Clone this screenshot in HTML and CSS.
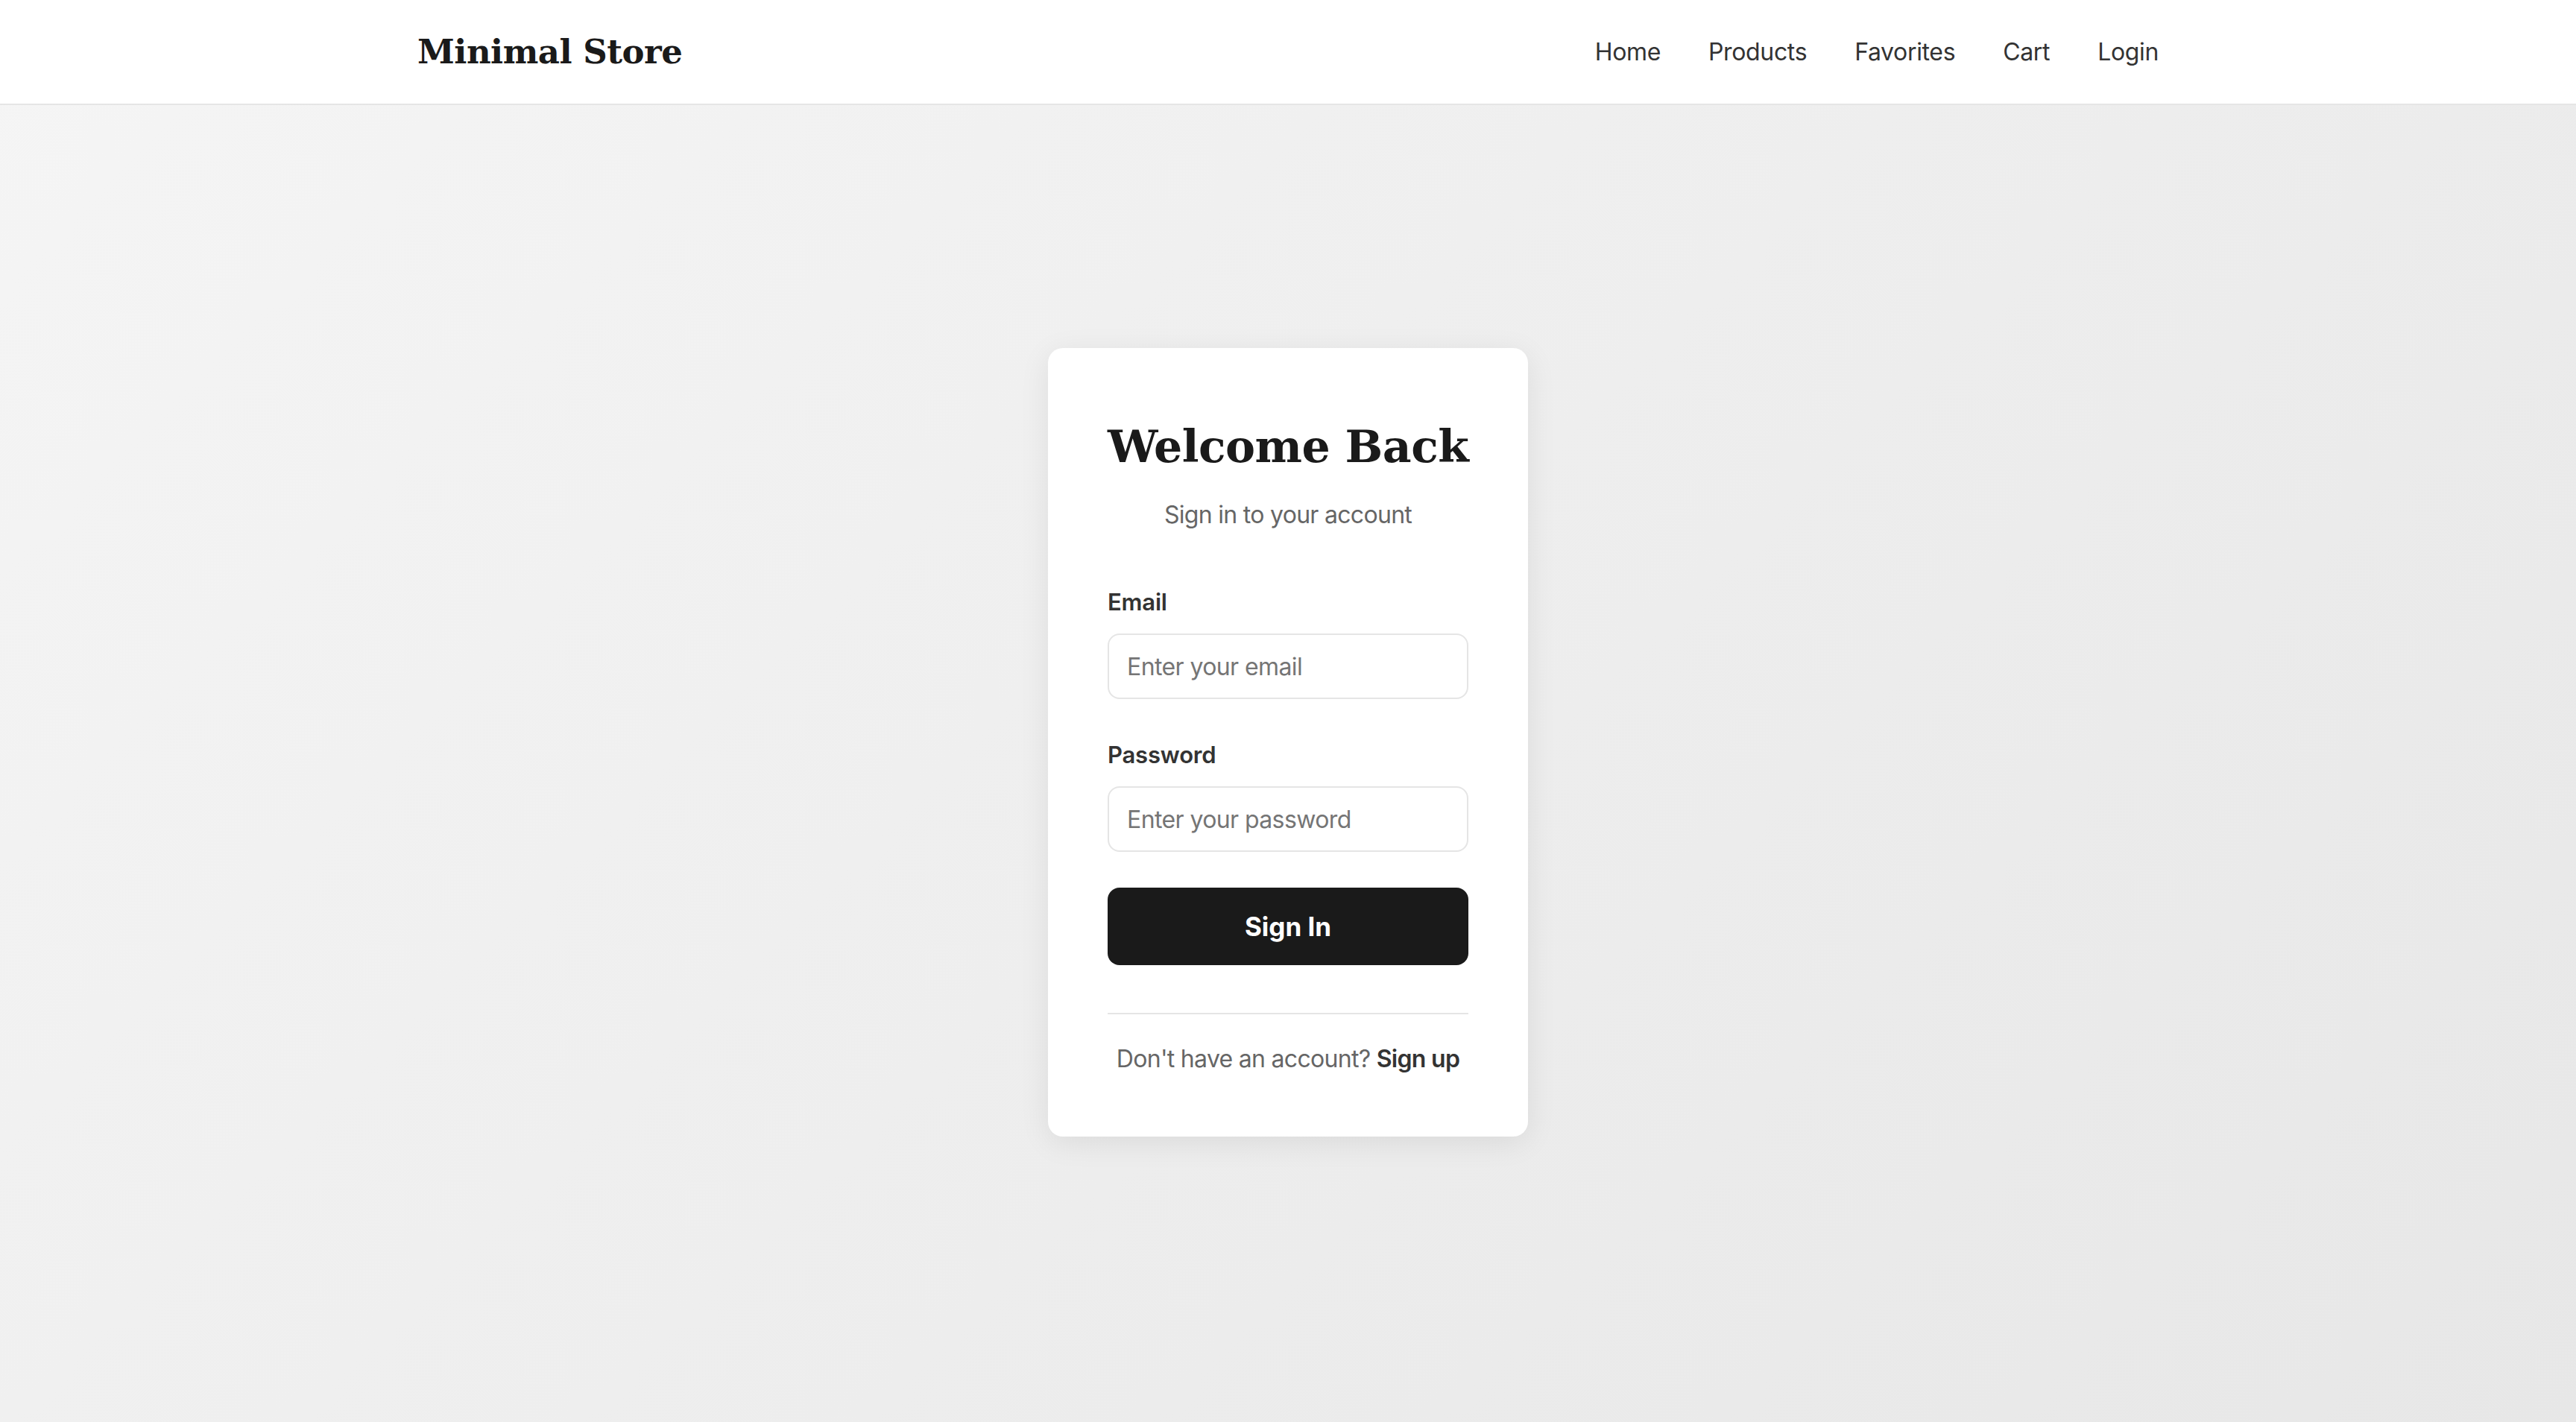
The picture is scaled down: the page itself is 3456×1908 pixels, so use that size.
FILE: index.html
```html
<!DOCTYPE html>
<html lang="en">
<head>
<meta charset="utf-8">
<title>Login - Minimal Store</title>
<link rel="stylesheet" href="styles.css">
</head>
<body>
<header class="site-header">
  <div class="header-inner">
    <a class="logo" href="#">Minimal Store</a>
    <nav class="nav">
      <a href="#">Home</a>
      <a href="#">Products</a>
      <a href="#">Favorites</a>
      <a href="#">Cart</a>
      <a href="#">Login</a>
    </nav>
  </div>
</header>
<main class="main">
  <div class="card">
    <h1 class="title">Welcome Back</h1>
    <p class="subtitle">Sign in to your account</p>
    <form class="form">
      <div class="field">
        <label class="label" for="email">Email</label>
        <input class="input" id="email" type="email" placeholder="Enter your email">
      </div>
      <div class="field">
        <label class="label" for="password">Password</label>
        <input class="input" id="password" type="password" placeholder="Enter your password">
      </div>
      <button class="btn" type="button">Sign In</button>
    </form>
    <div class="footer">Don't have an account? <a href="#">Sign up</a></div>
  </div>
</main>
</body>
</html>
```
FILE: styles.css
```css
* { box-sizing: border-box; }
html, body { margin: 0; padding: 0; }
body {
  min-height: 1908px;
  font-family: Inter, "Noto Sans", sans-serif;
  background: linear-gradient(135deg, #f5f5f5 0%, #e7e7e7 100%);
  color: #1a1a1a;
}
a { text-decoration: none; color: inherit; }

.site-header {
  background: #fff;
  border-bottom: 2px solid #e5e5e5;
}
.header-inner {
  max-width: 2400px;
  margin: 0 auto;
  padding: 0 32px;
  height: 139px;
  display: flex;
  align-items: center;
  justify-content: space-between;
}
.logo {
  font-family: "DejaVu Serif", Georgia, serif;
  font-weight: 700;
  font-size: 45px;
  line-height: 1;
  color: #1a1a1a;
  letter-spacing: -0.5px;
}
.nav {
  display: flex;
  gap: 64px;
}
.nav a {
  font-size: 32px;
  color: #333;
  line-height: 1;
  letter-spacing: -0.35px;
}

.main {
  display: flex;
  justify-content: center;
  padding-top: 326px;
}
.card {
  width: 644px;
  background: #fff;
  border-radius: 20px;
  padding: 96px 80px 80px;
  box-shadow: 0 8px 40px rgba(0, 0, 0, 0.08);
}
.title {
  margin: 0 0 32px;
  font-family: "DejaVu Serif", Georgia, serif;
  font-weight: 700;
  font-size: 60px;
  line-height: 72px;
  text-align: center;
  color: #1a1a1a;
  white-space: nowrap;
  letter-spacing: -0.5px;
}
.subtitle {
  margin: 0 0 70px;
  font-size: 32px;
  line-height: 48px;
  color: #666;
  text-align: center;
  letter-spacing: -0.7px;
}
.form { margin: 0; }
.field {
  display: flex;
  flex-direction: column;
  margin-bottom: 52px;
}
.field + .field { margin-bottom: 48px; }
.label {
  font-size: 31px;
  font-weight: 600;
  line-height: 45px;
  color: #333;
  margin-bottom: 20px;
  letter-spacing: -0.2px;
}
.input {
  width: 100%;
  height: 88px;
  padding: 0 24px;
  border: 2px solid #e5e5e5;
  border-radius: 16px;
  font-family: Inter, "Noto Sans", sans-serif;
  font-size: 32px;
  color: #333;
  background: #fff;
  outline: none;
  letter-spacing: -0.6px;
}
.input::placeholder { color: #757575; }
.btn {
  display: block;
  width: 100%;
  height: 104px;
  border: none;
  border-radius: 16px;
  background: #1a1a1a;
  color: #fff;
  font-family: Inter, "Noto Sans", sans-serif;
  font-size: 35px;
  font-weight: 700;
  cursor: pointer;
}
.footer {
  margin-top: 64px;
  padding-top: 36px;
  border-top: 2px solid #e5e5e5;
  font-size: 32px;
  line-height: 48px;
  color: #666;
  text-align: center;
  letter-spacing: -0.7px;
}
.footer a {
  color: #333;
  font-weight: 600;
}
```
